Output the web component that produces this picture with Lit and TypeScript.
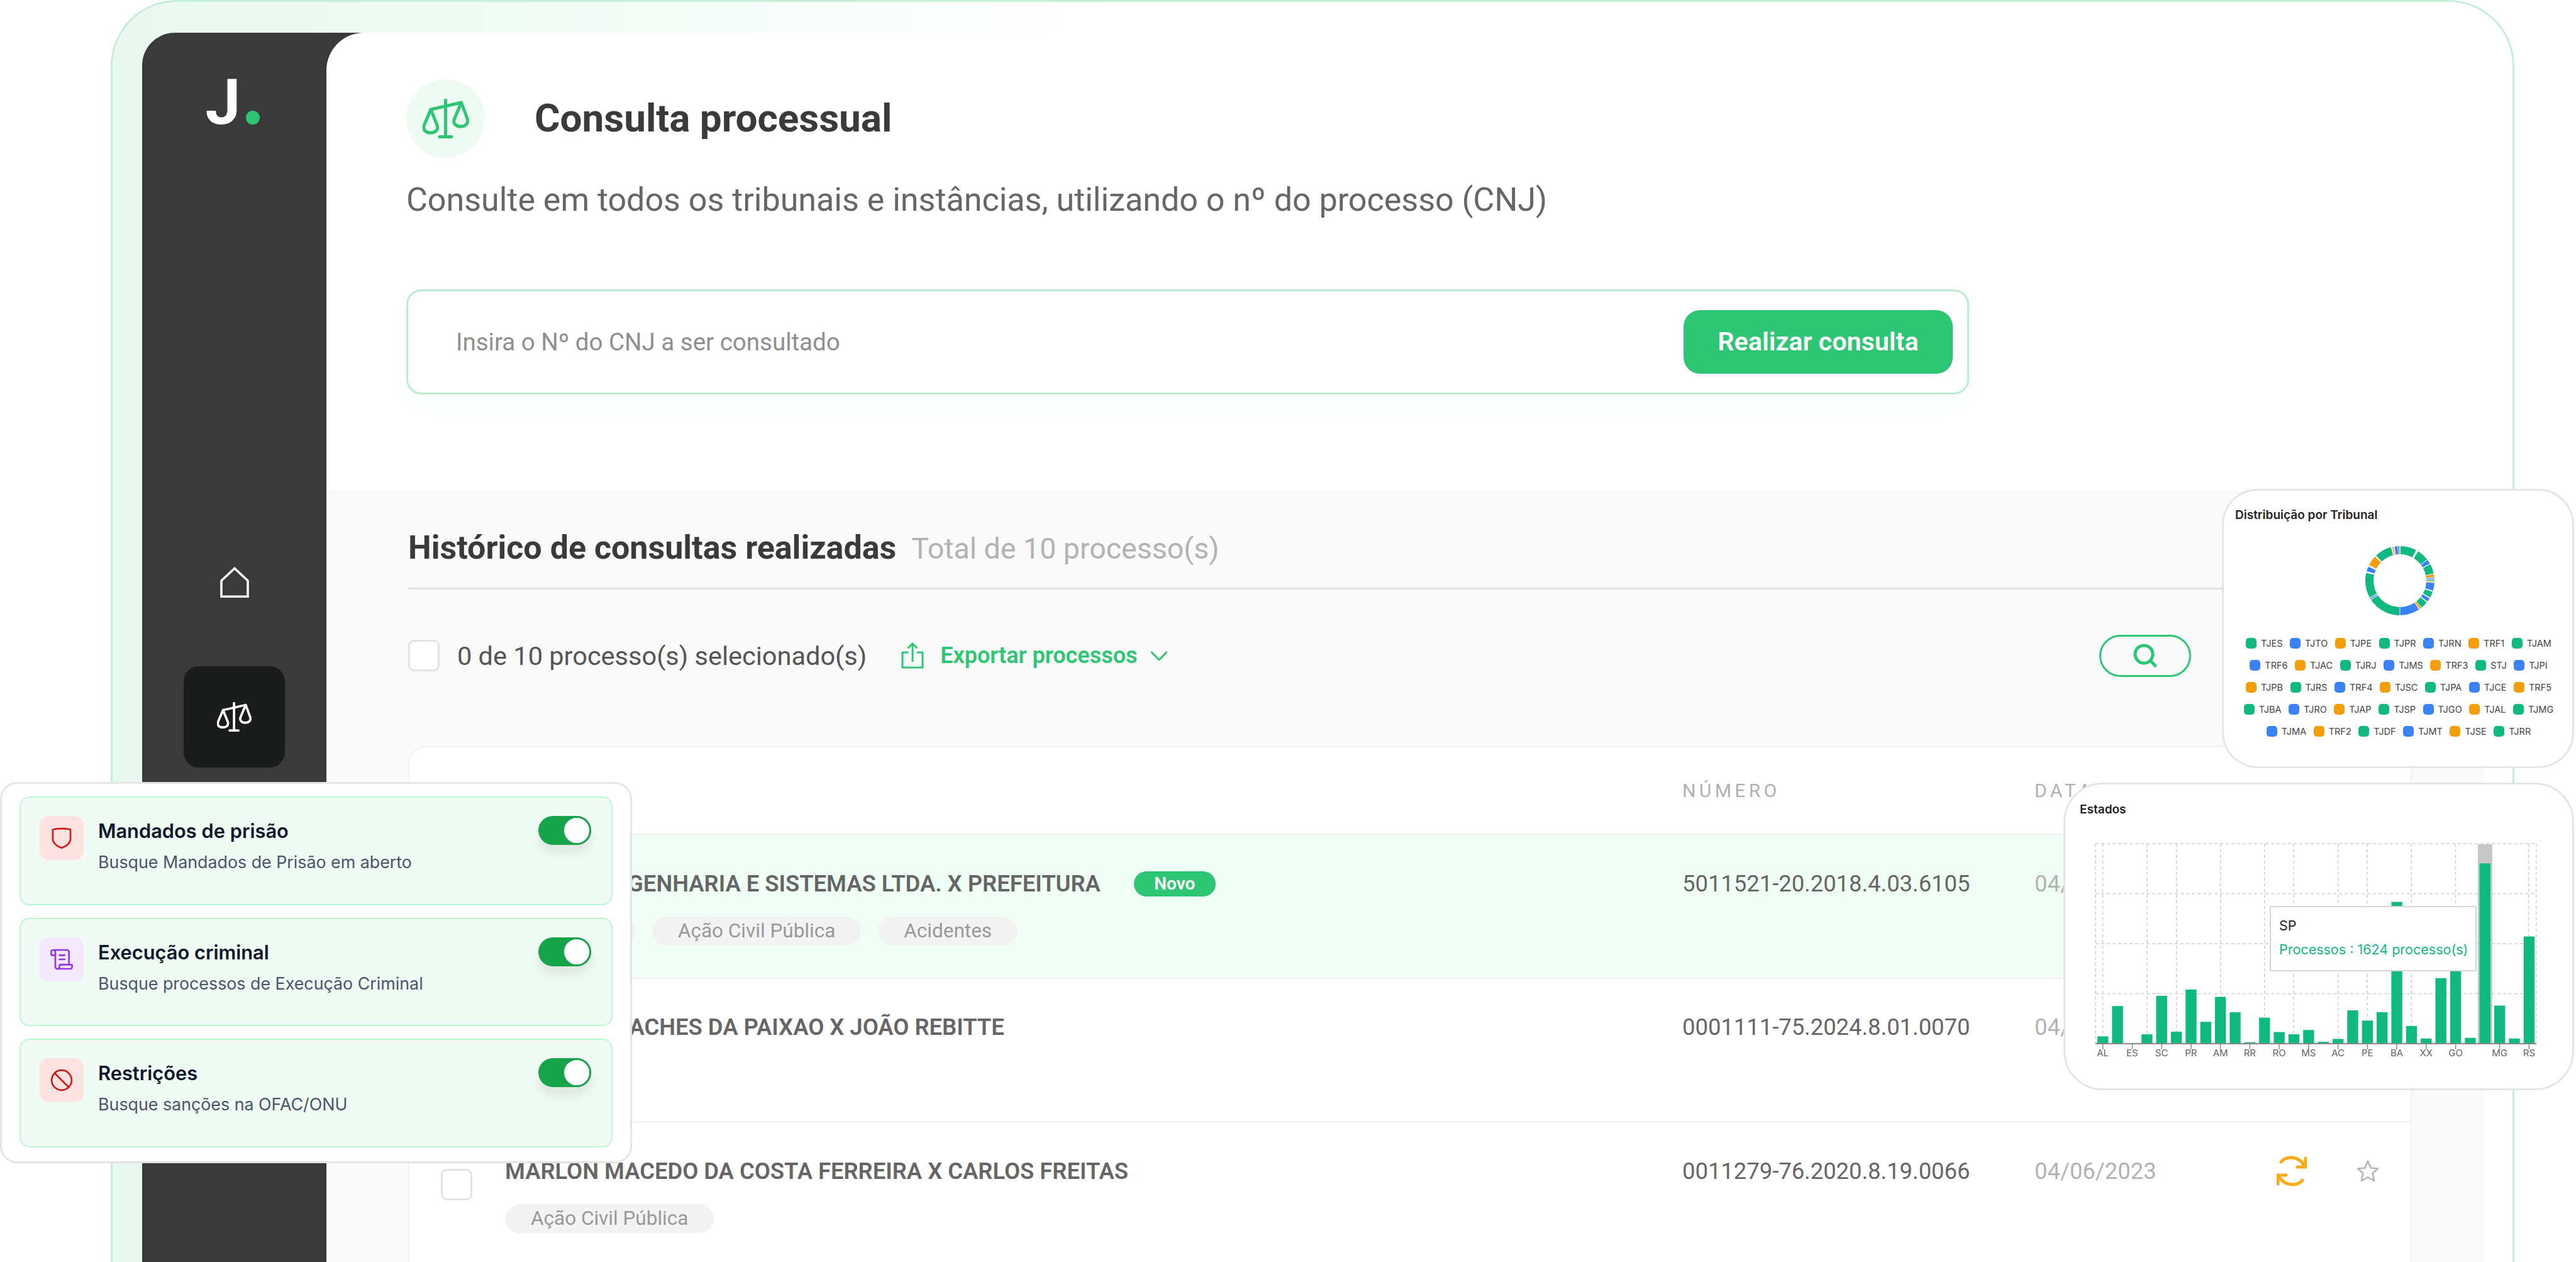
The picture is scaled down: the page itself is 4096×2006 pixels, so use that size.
import { LitElement, html, css, svg } from 'lit';
import { customElement } from 'lit/decorators.js';

const GREEN = '#10b981';
const BLUE = '#3b82f6';
const ORANGE = '#f59e0b';

const scaleIcon = html`<svg class="scale" viewBox="0 0 74 63" fill="none" stroke="currentColor" stroke-width="5" stroke-linejoin="round" stroke-linecap="round">
  <path d="M36.5 2V59M27 60.5H46M13 17L61.5 6" />
  <path d="M13 17L2 43C0.5 50 5 54 12.5 54C20 54 25 50 23.5 43Z" />
  <path d="M61.5 6L50 33C48.5 40 53 44 60.5 44C68 44 72.5 40 71.5 33Z" />
</svg>`;

const ROWS = [
  {
    title: 'TECNOS EN',
    rest: 'GENHARIA E SISTEMAS LTDA. X PREFEITURA',
    number: '5011521-20.2018.4.03.6105',
    date: '04/06/2023',
    isNew: true,
    tags: ['Mandato', 'Ação Civil Pública', 'Acidentes'],
  },
  {
    title: 'MARIA DE P',
    rest: 'ACHES DA PAIXAO X JOÃO REBITTE',
    number: '0001111-75.2024.8.01.0070',
    date: '04/06/2023',
    isNew: false,
    tags: [],
  },
  {
    title: 'MARLON MACEDO DA COSTA FERREIRA X CARLOS FREITAS',
    rest: '',
    number: '0011279-76.2020.8.19.0066',
    date: '04/06/2023',
    isNew: false,
    tags: ['Ação Civil Pública'],
  },
];

const FILTERS = [
  {
    tone: 'red',
    title: 'Mandados de prisão',
    desc: 'Busque Mandados de Prisão em aberto',
    icon: svg`<path d="M2.5 4Q15 1.5 27.5 4V17C27.5 23.5 21.5 27.5 15 30C8.5 27.5 2.5 23.5 2.5 17Z" />`,
    box: '0 0 30 32',
    size: 36,
  },
  {
    tone: 'purple',
    title: 'Execução criminal',
    desc: 'Busque processos de Execução Criminal',
    icon: svg`<path d="M15 12h-5M15 8h-5M19 17V5a2 2 0 0 0-2-2H4M8 21h12a2 2 0 0 0 2-2v-1a1 1 0 0 0-1-1H11a1 1 0 0 0-1 1v1a2 2 0 1 1-4 0V5a2 2 0 1 0-4 0v2a1 1 0 0 0 1 1h3" />`,
    box: '0 0 24 24',
    size: 40,
  },
  {
    tone: 'red',
    title: 'Restrições',
    desc: 'Busque sanções na OFAC/ONU',
    icon: svg`<circle cx="12" cy="12" r="10" /><path d="M4.9 4.9L19.1 19.1" />`,
    box: '0 0 24 24',
    size: 38,
  },
];

@customElement('filter-card')
export class FilterCard extends LitElement {
  static styles = css`
    :host {
      display: flex;
      flex-direction: column;
      gap: 20px;
      box-sizing: border-box;
      padding: 20px 28px;
      background: #fff;
      border: 3px solid #e5e5e5;
      border-radius: 27px;
      font-family: Inter, sans-serif;
    }
    .item {
      box-sizing: border-box;
      height: 172.5px;
      display: flex;
      padding: 29px 32px 0 30px;
      background: #f1fbf5;
      border: 2.5px solid #bbf7d0;
      border-radius: 16px;
    }
    .tile {
      flex: none;
      width: 70px;
      height: 70px;
      display: flex;
      align-items: center;
      justify-content: center;
      border-radius: 14px;
    }
    .tile.red {
      background: #fee2e2;
      color: #d01919;
    }
    .tile.purple {
      background: #f3e8ff;
      color: #9333ea;
    }
    .tile svg {
      fill: none;
      stroke: currentColor;
      stroke-width: 2.6px;
      stroke-linecap: round;
      stroke-linejoin: round;
    }
    .tile svg * {
      vector-effect: non-scaling-stroke;
    }
    .copy {
      flex: 1;
      margin-left: 23px;
    }
    .name {
      margin-top: 2px;
      font-size: 30.8px;
      line-height: 44px;
      font-weight: 600;
      color: #0f172a;
    }
    .desc {
      margin-top: 8px;
      font-size: 26.8px;
      line-height: 38px;
      color: #475569;
    }
    .toggle {
      flex: none;
      box-sizing: border-box;
      width: 84px;
      height: 46px;
      display: flex;
      justify-content: flex-end;
      background: #16a34a;
      border-radius: 23px;
      box-shadow: 0 14px 16px rgb(0 0 0 / 0.08);
    }
    .knob {
      box-sizing: border-box;
      width: 46px;
      height: 46px;
      background: #fff;
      border: 3px solid #16a34a;
      border-radius: 50%;
    }
  `;

  render() {
    return FILTERS.map(
      (f) => html`<div class="item">
        <div class="tile ${f.tone}"><svg width=${f.size} height=${f.size} viewBox=${f.box}>${f.icon}</svg></div>
        <div class="copy">
          <div class="name">${f.title}</div>
          <div class="desc">${f.desc}</div>
        </div>
        <div class="toggle"><div class="knob"></div></div>
      </div>`
    );
  }
}

// clockwise degrees from 12 o'clock, read off the reference
const SLICES: [number, number, string][] = [
  [1, 28, GREEN], [32, 52, GREEN], [53, 60, BLUE], [61.5, 78, GREEN], [79, 84, ORANGE],
  [85, 86, BLUE], [87, 88, BLUE], [89, 90.5, GREEN], [92, 93, ORANGE], [94, 107, BLUE],
  [109, 119, GREEN], [121, 127, BLUE], [129, 141, GREEN], [142, 145, ORANGE], [146.5, 179.5, BLUE],
  [180.5, 236, GREEN], [237, 238.5, BLUE], [239, 240, BLUE], [241, 283, GREEN], [286, 294, BLUE],
  [297, 314, ORANGE], [316.5, 345, GREEN], [347, 349, ORANGE], [351, 356, BLUE], [357, 359, BLUE],
];

const LEGEND: [string, string][][] = [
  [['TJES', GREEN], ['TJTO', BLUE], ['TJPE', ORANGE], ['TJPR', GREEN], ['TJRN', BLUE], ['TRF1', ORANGE], ['TJAM', GREEN]],
  [['TRF6', BLUE], ['TJAC', ORANGE], ['TJRJ', GREEN], ['TJMS', BLUE], ['TRF3', ORANGE], ['STJ', GREEN], ['TJPI', BLUE]],
  [['TJPB', ORANGE], ['TJRS', GREEN], ['TRF4', BLUE], ['TJSC', ORANGE], ['TJPA', GREEN], ['TJCE', BLUE], ['TRF5', ORANGE]],
  [['TJBA', GREEN], ['TJRO', BLUE], ['TJAP', ORANGE], ['TJSP', GREEN], ['TJGO', BLUE], ['TJAL', ORANGE], ['TJMG', GREEN]],
  [['TJMA', BLUE], ['TRF2', ORANGE], ['TJDF', GREEN], ['TJMT', BLUE], ['TJSE', ORANGE], ['TJRR', GREEN]],
];

@customElement('tribunal-card')
export class TribunalCard extends LitElement {
  static styles = css`
    :host {
      display: block;
      box-sizing: border-box;
      background: #fff;
      border: 3.5px solid #e5e5e5;
      border-radius: 57px;
      font-family: Inter, sans-serif;
      color: #444;
    }
    h3 {
      margin: 26px 0 0 18px;
      font-size: 19px;
      line-height: 26px;
      font-weight: 600;
      color: #222;
    }
    .ring {
      display: block;
      margin: 36px 0 0 225px;
      width: 110px;
      height: 110px;
    }
    .legend {
      margin: 27px 0 0 2px;
    }
    .line {
      height: 35px;
      display: flex;
      align-items: center;
      justify-content: center;
      gap: 11.5px;
    }
    .key {
      display: flex;
      align-items: center;
      gap: 7px;
      font-size: 14.5px;
    }
    .dot {
      width: 17px;
      height: 17px;
      border-radius: 5px;
    }
  `;

  render() {
    return html`<h3>Distribuição por Tribunal</h3>
      <svg class="ring" viewBox="0 0 110 110">
        ${SLICES.map(
          ([from, to, color]) => svg`<circle cx="55" cy="55" r="48.5" fill="none" stroke=${color} stroke-width="13"
            pathLength="360" stroke-dasharray="${to - from} 360" stroke-dashoffset=${-from} transform="rotate(-90 55 55)" />`
        )}
      </svg>
      <div class="legend">
        ${LEGEND.map(
          (line) => html`<div class="line">
            ${line.map(([name, color]) => html`<span class="key"><i class="dot" style="background:${color}"></i>${name}</span>`)}
          </div>`
        )}
      </div>`;
  }
}

// bar tops as measured on the reference crop, baseline at 1303
const BAR_TOPS = [
  1268, 1122, 1300, 1258, 1073, 1245, 1043, 1198, 1078, 1152, 1296, 1178, 1247, 1258, 1237,
  1294, 1280, 1143, 1192, 1152, 622, 1218, 1278, 988, 900, 1275, 437, 1120, 1278, 788,
];
const GRID_X = [0, 22, 156, 245, 378, 511, 599, 733, 821, 955, 1088, 1310, 1332];
const AXIS: [string, number][] = [
  ['AL', 0], ['ES', 2], ['SC', 4], ['PR', 6], ['AM', 8], ['RR', 10], ['RO', 12], ['MS', 14],
  ['AC', 16], ['PE', 18], ['BA', 20], ['XX', 22], ['GO', 24], ['MG', 27], ['RS', 29],
];
const PITCH = 23.37;
const BASE = 318;

@customElement('estados-card')
export class EstadosCard extends LitElement {
  static styles = css`
    :host {
      display: block;
      box-sizing: border-box;
      background: #fff;
      border: 3.5px solid #e5e5e5;
      border-radius: 62px;
      font-family: Inter, sans-serif;
    }
    h3 {
      margin: 27px 0 0 23px;
      font-size: 19px;
      line-height: 26px;
      font-weight: 600;
      color: #222;
    }
    .chart {
      display: block;
      margin: 41px 0 0 48px;
      overflow: visible;
    }
    .chart text {
      font-size: 15px;
      fill: #666;
      text-anchor: middle;
    }
    .tip {
      position: absolute;
      left: 325px;
      top: 193px;
      box-sizing: border-box;
      width: 329px;
      height: 104px;
      padding: 15px 0 0 13px;
      background: #fff;
      border: 2px solid #d6d6d6;
      font-size: 21.5px;
      line-height: 28px;
      color: #222;
    }
    .tip div + div {
      margin-top: 10px;
      color: #10b981;
    }
  `;

  render() {
    return html`<h3>Estados</h3>
      <svg class="chart" width="701" height="350" viewBox="0 0 701 350">
        <g stroke="#cfcfcf" stroke-width="1.5" stroke-dasharray="5 4" fill="none">
          ${[0, 1, 2, 3].map((i) => svg`<path d="M0 ${i * 79.5}H701" />`)}
          ${GRID_X.map((x) => svg`<path d="M${x * 0.526} 0V${BASE}" />`)}
        </g>
        <rect x=${26.5 * PITCH - 11.5} y="1" width="23" height=${BASE - 1} fill="#c8c8c8" />
        ${BAR_TOPS.map((top, i) => {
          const h = (1303 - top) * 0.331;
          return svg`<rect x=${(i + 0.5) * PITCH - 8.7} y=${BASE - h} width="17.4" height=${h} fill=${GREEN} />`;
        })}
        <path d="M0 ${BASE}H701" stroke="#8a8a8a" stroke-width="2" />
        ${AXIS.map(([name, i]) => {
          const x = (i + 0.5) * PITCH;
          return svg`<path d="M${x} ${BASE}v9" stroke="#8a8a8a" stroke-width="1.5" /><text x=${x} y="338">${name}</text>`;
        })}
      </svg>
      <div class="tip">
        <div>SP</div>
        <div>Processos : 1624 processo(s)</div>
      </div>`;
  }
}

@customElement('app-root')
export class AppRoot extends LitElement {
  static styles = css`
    :host {
      display: block;
      position: relative;
      width: 4096px;
      height: 2006px;
      overflow: hidden;
      background: #fff;
      font-family: Roboto, sans-serif;
    }
    .frame {
      box-sizing: border-box;
      width: 3822px;
      height: 2106px;
      margin-left: 176px;
      padding: 48.5px 46px 0 47px;
      background: linear-gradient(90deg, #e9f8f1 0, #f0fbf5 15%, #fff 42%);
      border: 3.5px solid #c6efdb;
      border-bottom: 0;
      border-radius: 105px 105px 0 0;
    }
    .shell {
      height: 100%;
      display: grid;
      grid-template-columns: 293px 1fr;
      background: linear-gradient(90deg, #393a39 0 400px, transparent 400px);
      border-radius: 52px 60px 0 0;
    }
    .side {
      display: flex;
      flex-direction: column;
      align-items: center;
      color: #fff;
    }
    .logo {
      display: flex;
      align-items: flex-end;
      gap: 9px;
      height: 71px;
      margin: 75px 5px 0 0;
      font-size: 100px;
      line-height: 71px;
      font-weight: 700;
    }
    .logo i {
      width: 22px;
      height: 22px;
      background: #2ec674;
      border-radius: 50%;
    }
    .home {
      width: 46px;
      height: 49px;
      margin-top: 703px;
    }
    .nav-on {
      width: 161px;
      height: 161px;
      margin-top: 109px;
      display: flex;
      align-items: center;
      justify-content: center;
      background: #1a1c1b;
      border-radius: 24px;
    }
    .nav-on .scale {
      width: 55px;
      height: 47px;
    }
    .panel {
      background: #fff;
      border-radius: 60px 60px 0 0;
      overflow: hidden;
    }
    .top {
      box-sizing: border-box;
      height: 728px;
      padding: 74px 0 0 127px;
    }
    .head {
      display: flex;
      align-items: center;
      gap: 79px;
    }
    .badge {
      width: 125px;
      height: 125px;
      display: flex;
      align-items: center;
      justify-content: center;
      background: #eefbf3;
      border-radius: 50%;
      color: #2ec674;
    }
    .badge .scale {
      width: 74px;
      height: 63px;
    }
    h1 {
      margin: 0;
      font-size: 62px;
      line-height: 80px;
      font-weight: 700;
      color: #3a3a3a;
    }
    .sub {
      margin-top: 37px;
      font-size: 52px;
      line-height: 60px;
      color: #666;
    }
    .search {
      box-sizing: border-box;
      width: 2485px;
      height: 167px;
      margin-top: 112px;
      padding: 0 23px 0 76px;
      display: flex;
      align-items: center;
      justify-content: space-between;
      border: 3px solid #b9ecd1;
      border-radius: 24px;
      box-shadow: 0 16px 40px rgb(46 198 116 / 0.04);
      font-size: 38.5px;
      color: #8f8f8f;
    }
    .go {
      width: 428px;
      height: 101px;
      display: flex;
      align-items: center;
      justify-content: center;
      background: #2ec674;
      border-radius: 26px;
      font-size: 41.3px;
      font-weight: 600;
      color: #fff;
    }
    .history {
      height: 1300px;
      padding: 61px 114px 0 130px;
      background: #fafafa;
    }
    .h-line {
      display: flex;
      align-items: baseline;
      gap: 24px;
      padding-bottom: 32px;
      border-bottom: 3px solid #e3e3e3;
      font-size: 46.5px;
      line-height: 60px;
      color: #b3b3b3;
    }
    .h-line b {
      font-size: 52px;
      font-weight: 700;
      color: #3a3a3a;
    }
    .tools {
      display: flex;
      align-items: center;
      height: 67px;
      margin-top: 72px;
      padding-right: 351px;
      font-size: 41.5px;
      color: #555;
    }
    .check {
      flex: none;
      box-sizing: border-box;
      width: 50px;
      height: 50px;
      background: #fff;
      border: 3px solid #e3e3e3;
      border-radius: 9px;
    }
    .count {
      margin-left: 28px;
    }
    .export {
      display: flex;
      align-items: center;
      margin-left: 55px;
      font-size: 36px;
      font-weight: 600;
      color: #2ec674;
    }
    .export svg {
      fill: none;
      stroke: currentColor;
      stroke-width: 3;
    }
    .export span {
      margin: 0 20px 0 26px;
    }
    .pill {
      margin-left: auto;
      box-sizing: border-box;
      width: 146px;
      height: 67px;
      display: flex;
      align-items: center;
      justify-content: center;
      border: 3px solid #2ec674;
      border-radius: 34px;
    }
    .table {
      margin-top: 110px;
      background: #fff;
      border: 2px solid #f2f2f2;
      border-bottom: 0;
      border-radius: 28px 28px 0 0;
    }
    .grid {
      display: grid;
      grid-template-columns: 2024px 560px 1fr;
    }
    .thead {
      height: 137px;
      align-items: center;
      font-size: 30px;
      letter-spacing: 0.18em;
      color: #b0b0b0;
    }
    .thead span:first-child {
      padding-left: 151px;
    }
    .row {
      box-sizing: border-box;
      height: 228.5px;
      border-top: 3px solid #f2f2f2;
    }
    .row.fresh {
      background: #f0fff6;
    }
    .who {
      display: flex;
      padding-left: 50px;
      gap: 52px;
    }
    .who .check {
      margin-top: 73px;
    }
    .line1 {
      display: flex;
      align-items: center;
      gap: 53px;
      margin-top: 55px;
      font-size: 36.4px;
      line-height: 44px;
      font-weight: 600;
      color: #666;
    }
    .new {
      width: 130px;
      height: 40px;
      display: flex;
      align-items: center;
      justify-content: center;
      background: #2ec674;
      border-radius: 20px;
      font-size: 28px;
      color: #fff;
    }
    .tags {
      display: flex;
      gap: 27px;
      margin-top: 30px;
    }
    .tag {
      height: 46px;
      padding: 0 41px;
      display: flex;
      align-items: center;
      background: #f3f3f3;
      border-radius: 23px;
      font-size: 31.5px;
      color: #999;
    }
    .num,
    .date {
      align-self: start;
      height: 44px;
      margin-top: 55px;
      font-size: 36.4px;
      line-height: 44px;
      color: #666;
    }
    .date {
      color: #b3b3b3;
      display: flex;
      align-items: center;
    }
    .refresh {
      margin-left: 191px;
      width: 48px;
      height: 49px;
    }
    .star {
      margin-left: 79px;
      width: 36px;
      height: 35px;
    }
    filter-card {
      position: absolute;
      left: 0;
      top: 1243px;
      width: 1005px;
      height: 606px;
    }
    tribunal-card {
      position: absolute;
      left: 3533px;
      top: 777px;
      width: 560px;
      height: 444px;
    }
    estados-card {
      position: absolute;
      left: 3281px;
      top: 1244px;
      width: 812px;
      height: 489px;
    }
  `;

  render() {
    return html`<div class="frame">
        <div class="shell">
          <nav class="side">
            <div class="logo">J<i></i></div>
            <svg class="home" viewBox="0 0 46 49" fill="none" stroke="currentColor" stroke-width="3.6">
              <path d="M2 47.2V22L23 2.5L44 22V47.2Z" />
            </svg>
            <div class="nav-on">${scaleIcon}</div>
          </nav>
          <main class="panel">
            <section class="top">
              <div class="head">
                <div class="badge">${scaleIcon}</div>
                <h1>Consulta processual</h1>
              </div>
              <div class="sub">Consulte em todos os tribunais e instâncias, utilizando o nº do processo (CNJ)</div>
              <div class="search">
                <span>Insira o Nº do CNJ a ser consultado</span>
                <div class="go">Realizar consulta</div>
              </div>
            </section>
            <section class="history">
              <div class="h-line"><b>Histórico de consultas realizadas</b><span>Total de 10 processo(s)</span></div>
              <div class="tools">
                <div class="check"></div>
                <span class="count">0 de 10 processo(s) selecionado(s)</span>
                <div class="export">
                  <svg width="36" height="42" viewBox="0 0 36 42">
                    <path d="M11 16H2V40H34V16H25M18 31V2M10.5 9.5L18 2L25.5 9.5" />
                  </svg>
                  <span>Exportar processos</span>
                  <svg width="28" height="15" viewBox="0 0 28 15"><path d="M1.5 1L14 14L26.5 1" /></svg>
                </div>
                <div class="pill">
                  <svg width="38" height="38" viewBox="0 0 38 38" fill="none" stroke="#2ec674" stroke-width="5" stroke-linecap="round">
                    <circle cx="17" cy="17" r="14" /><path d="M27.5 27.5L35 35" />
                  </svg>
                </div>
              </div>
              <div class="table">
                <div class="grid thead"><span>PARTES</span><span>NÚMERO</span><span>DATA</span></div>
                ${ROWS.map(
                  (r) => html`<div class="grid row ${r.isNew ? 'fresh' : ''}">
                    <div class="who">
                      <div class="check"></div>
                      <div>
                        <div class="line1">
                          <span>${r.title}${r.rest}</span>
                          ${r.isNew ? html`<span class="new">Novo</span>` : ''}
                        </div>
                        <div class="tags">${r.tags.map((t) => html`<span class="tag">${t}</span>`)}</div>
                      </div>
                    </div>
                    <div class="num">${r.number}</div>
                    <div class="date">
                      ${r.date}
                      <svg class="refresh" viewBox="0 0 48 49" fill="none" stroke="#fbab18" stroke-width="5" stroke-linecap="round">
                        <path d="M7 10C14 1 33 -1 43 14M33 18H46V4" />
                        <path d="M41 39C34 48 15 50 4 34M15 31H2V45" />
                      </svg>
                      <svg class="star" viewBox="0 0 36 35" fill="#fbfbfb" stroke="#b5b5b5" stroke-width="2.6" stroke-linejoin="round">
                        <path d="M18 1.5L22.5 12.5L34 13.5L25.5 21L28 33L18 27L8 33L10.5 21L2 13.5L13.5 12.5Z" />
                      </svg>
                    </div>
                  </div>`
                )}
              </div>
            </section>
          </main>
        </div>
      </div>
      <filter-card></filter-card>
      <tribunal-card></tribunal-card>
      <estados-card></estados-card>`;
  }
}
